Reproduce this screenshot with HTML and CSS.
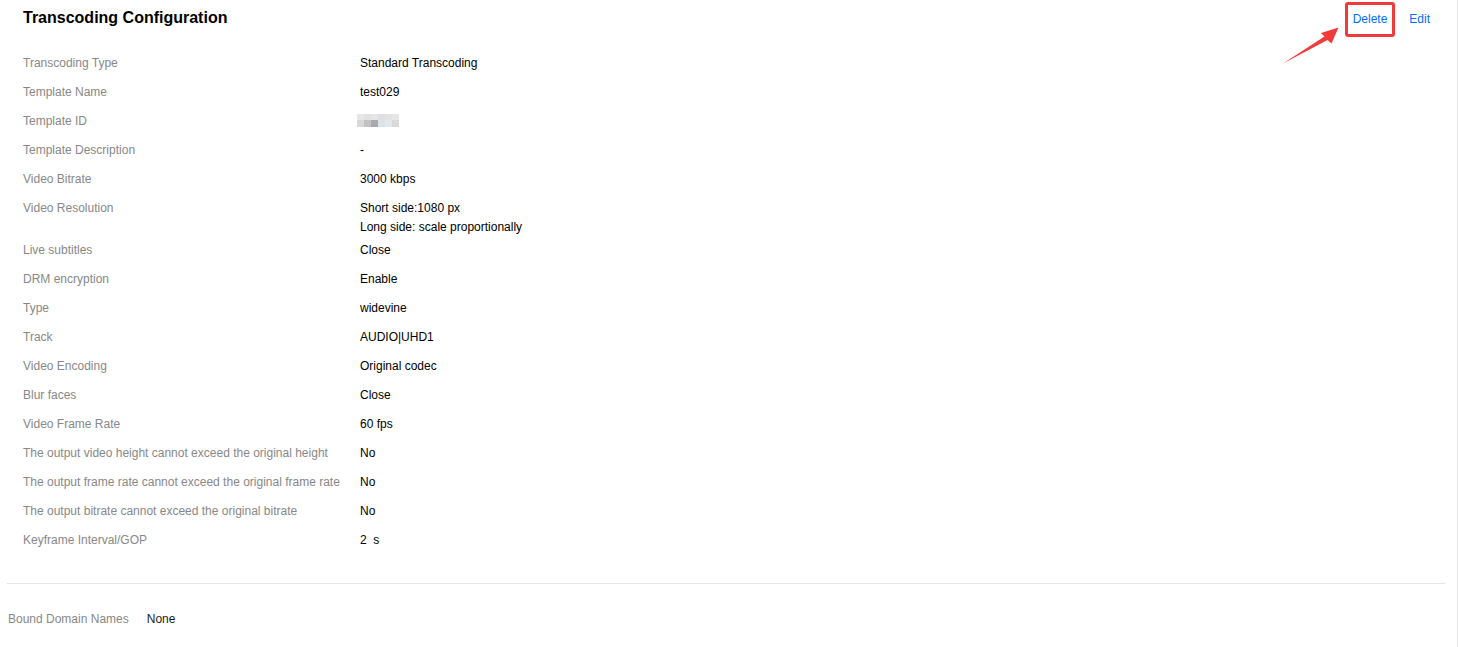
FILE: index.html
```html
<!DOCTYPE html>
<html lang="en">
<head>
<meta charset="utf-8">
<title>Transcoding Configuration</title>
<link rel="stylesheet" href="styles.css">
</head>
<body>
<div class="page">
  <section class="config">
    <header class="config-head">
      <h2 class="title">Transcoding Configuration</h2>
      <div class="actions">
        <a class="link link-marked">Delete</a>
        <a class="link">Edit</a>
      </div>
    </header>
    <div class="fields">
      <div class="row"><div class="label">Transcoding Type</div><div class="value">Standard Transcoding</div></div>
      <div class="row"><div class="label">Template Name</div><div class="value">test029</div></div>
      <div class="row"><div class="label">Template ID</div><div class="value">
        <svg class="blur" width="42" height="13" viewBox="0 0 42 13">
          <rect x="0" y="0" width="7" height="6" fill="#e9e7e5"/>
          <rect x="7" y="0" width="7" height="6" fill="#e1e1e1"/>
          <rect x="14" y="0" width="7" height="6" fill="#e4e5e9"/>
          <rect x="21" y="0" width="7" height="6" fill="#dfdfdf"/>
          <rect x="28" y="0" width="7" height="6" fill="#e2e2e2"/>
          <rect x="35" y="0" width="7" height="6" fill="#e6e6e6"/>
          <rect x="0" y="6" width="7" height="7" fill="#d9d8d6"/>
          <rect x="7" y="6" width="7" height="7" fill="#c2c2c2"/>
          <rect x="14" y="6" width="7" height="7" fill="#a9a9a9"/>
          <rect x="21" y="6" width="7" height="7" fill="#dde1e8"/>
          <rect x="28" y="6" width="7" height="7" fill="#e6e8e8"/>
          <rect x="35" y="6" width="7" height="7" fill="#d9d9d9"/>
        </svg>
      </div></div>
      <div class="row"><div class="label">Template Description</div><div class="value">-</div></div>
      <div class="row"><div class="label">Video Bitrate</div><div class="value">3000 kbps</div></div>
      <div class="row"><div class="label">Video Resolution</div><div class="value"><div>Short side:1080 px</div><div>Long side: scale proportionally</div></div></div>
      <div class="row"><div class="label">Live subtitles</div><div class="value">Close</div></div>
      <div class="row"><div class="label">DRM encryption</div><div class="value">Enable</div></div>
      <div class="row"><div class="label">Type</div><div class="value">widevine</div></div>
      <div class="row"><div class="label">Track</div><div class="value">AUDIO|UHD1</div></div>
      <div class="row"><div class="label">Video Encoding</div><div class="value">Original codec</div></div>
      <div class="row"><div class="label">Blur faces</div><div class="value">Close</div></div>
      <div class="row"><div class="label">Video Frame Rate</div><div class="value">60 fps</div></div>
      <div class="row"><div class="label">The output video height cannot exceed the original height</div><div class="value">No</div></div>
      <div class="row"><div class="label">The output frame rate cannot exceed the original frame rate</div><div class="value">No</div></div>
      <div class="row"><div class="label">The output bitrate cannot exceed the original bitrate</div><div class="value">No</div></div>
      <div class="row"><div class="label">Keyframe Interval/GOP</div><div class="value">2&nbsp; s</div></div>
    </div>
  </section>
  <hr class="divider">
  <section class="bound">
    <span class="bound-label">Bound Domain Names</span>
    <span class="bound-value">None</span>
  </section>
  <svg class="arrow" width="70" height="50" viewBox="1278 20 70 50">
    <polygon points="1283,63.5 1324.5,36.5 1321,33 1338.5,27.5 1331.5,43.5 1327.5,40" fill="#f23a3a"/>
  </svg>
</div>
</body>
</html>
```

FILE: styles.css
```css
* { box-sizing: border-box; }
html, body { margin: 0; padding: 0; background: #fff; }
body {
  font-family: "Liberation Sans", Arial, sans-serif;
  font-size: 12px;
  color: #000;
}
.page {
  position: relative;
  width: 1458px;
  min-height: 647px;
  border-right: 1px solid #e6e6e6;
}
.config { padding: 0 0 0 23px; }
.config-head {
  display: flex;
  justify-content: space-between;
  align-items: flex-start;
  padding-top: 6px;
  padding-right: 27px;
}
.title {
  margin: 0;
  font-size: 16px;
  line-height: 24px;
  font-weight: bold;
  color: #000;
}
.actions {
  display: flex;
  gap: 22px;
  padding-top: 4px;
  line-height: 18px;
}
.link {
  color: #006eff;
  cursor: pointer;
  text-decoration: none;
}
.link-marked { position: relative; }
.link-marked::after {
  content: "";
  position: absolute;
  left: -8px;
  right: -8px;
  top: -8px;
  bottom: -9px;
  border: 3px solid #f23a3a;
  border-radius: 3px;
}
.fields {
  margin-top: 24px;
  display: flex;
  flex-direction: column;
  gap: 4px;
}
.row {
  display: flex;
  min-height: 25px;
  line-height: 19px;
}
.label {
  width: 337px;
  flex-shrink: 0;
  color: #888;
}
.value { color: #000; }
.blur { display: block; margin: 2px 0 0 -3px; }
.divider {
  margin: 27px 12px 0 7px;
  border: 0;
  border-top: 1px solid #e5e5e5;
}
.bound {
  padding: 26px 0 0 8px;
  line-height: 19px;
  display: flex;
  gap: 18px;
}
.bound-label { color: #888; }
.bound-value { color: #222; }
.arrow {
  position: absolute;
  left: 1278px;
  top: 20px;
}
```
